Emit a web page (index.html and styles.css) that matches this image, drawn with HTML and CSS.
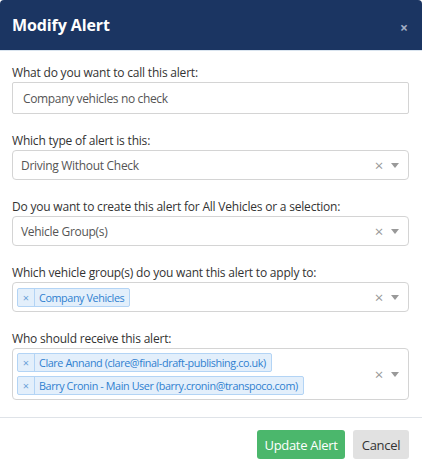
FILE: index.html
```html
<!DOCTYPE html>
<html>
<head>
<meta charset="utf-8">
<link rel="stylesheet" href="styles.css">
</head>
<body>
<div class="modal">
  <div class="modal-header">
    <h1 class="modal-title">Modify Alert</h1>
    <span class="close">×</span>
  </div>
  <div class="modal-body">
    <div class="group">
      <label class="label">What do you want to call this alert:</label>
      <div class="input">Company vehicles no check</div>
    </div>
    <div class="group">
      <label class="label">Which type of alert is this:</label>
      <div class="select">
        <div class="value">Driving Without Check</div>
        <span class="clear">×</span><span class="caret"></span>
      </div>
    </div>
    <div class="group">
      <label class="label">Do you want to create this alert for All Vehicles or a selection:</label>
      <div class="select">
        <div class="value">Vehicle Group(s)</div>
        <span class="clear">×</span><span class="caret"></span>
      </div>
    </div>
    <div class="group">
      <label class="label">Which vehicle group(s) do you want this alert to apply to:</label>
      <div class="select multi">
        <div class="tags">
          <span class="tag"><span class="tag-x">×</span><span class="tag-text">Company Vehicles</span></span>
        </div>
        <span class="clear">×</span><span class="caret"></span>
      </div>
    </div>
    <div class="group">
      <label class="label">Who should receive this alert:</label>
      <div class="select multi">
        <div class="tags">
          <span class="tag"><span class="tag-x">×</span><span class="tag-text">Clare Annand (clare@final-draft-publishing.co.uk)</span></span>
          <span class="tag"><span class="tag-x">×</span><span class="tag-text">Barry Cronin - Main User (barry.cronin@transpoco.com)</span></span>
        </div>
        <span class="clear">×</span><span class="caret"></span>
      </div>
    </div>
  </div>
  <div class="modal-footer">
    <button class="btn btn-primary">Update Alert</button>
    <button class="btn btn-default">Cancel</button>
  </div>
</div>
</body>
</html>
```
FILE: styles.css
```css
html, body {
  margin: 0;
  padding: 0;
  background: #ffffff;
}
body {
  font-family: "Open Sans", "Noto Sans", sans-serif;
  font-size: 12px;
  color: #333;
}
.modal {
  width: 422px;
  height: 471px;
  display: flex;
  flex-direction: column;
  background: #fff;
}
.modal-header {
  height: 50px;
  background: #1b3562;
  border-bottom: 1px solid #d9e4ef;
  border-radius: 4px 4px 0 0;
  display: flex;
  align-items: center;
  justify-content: space-between;
  padding: 0 14px 0 12px;
  flex-shrink: 0;
}
.modal-title {
  margin: 0;
  color: #fff;
  font-size: 16px;
  font-weight: 700;
  letter-spacing: -0.1px;
}
.close {
  color: #a3aec4;
  font-size: 14px;
  font-weight: 700;
  margin-top: 4px;
}
.modal-body {
  padding: 13px 13px 17px 12px;
  display: flex;
  flex-direction: column;
  gap: 18px;
  border-bottom: 1px solid #dfe3e8;
}
.group {
  display: flex;
  flex-direction: column;
}
.label {
  line-height: 17px;
  margin-bottom: 1px;
  color: #333;
  letter-spacing: -0.2px;
}
.input {
  height: 32px;
  box-sizing: border-box;
  border: 1px solid #d4d4d4;
  border-radius: 2px;
  padding: 0 10px;
  display: flex;
  align-items: center;
  color: #555;
  letter-spacing: -0.35px;
}
.select {
  min-height: 30px;
  box-sizing: border-box;
  border: 1px solid #d4d4d4;
  border-radius: 4px;
  padding: 0 8px 0 8px;
  display: flex;
  align-items: center;
  color: #555;
}
.value {
  flex: 1;
  letter-spacing: -0.3px;
}
.clear {
  color: #999;
  font-size: 15px;
  width: 12px;
  text-align: center;
  margin-right: 6px;
}
.caret {
  width: 0;
  height: 0;
  border-left: 4px solid transparent;
  border-right: 4px solid transparent;
  border-top: 5px solid #999;
  margin-right: 1px;
}
.multi {
  padding: 4px 8px 4px 4px;
}
.tags {
  flex: 1;
  display: flex;
  flex-direction: column;
  align-items: flex-start;
  gap: 4px;
}
.tag {
  display: inline-flex;
  align-items: stretch;
  height: 19px;
  box-sizing: border-box;
  background: #e3effb;
  border: 1px solid #b3d4f5;
  border-radius: 2px;
  color: #2f7fd0;
  font-size: 10.8px;
  letter-spacing: -0.4px;
}
.tag-x {
  width: 16px;
  display: flex;
  align-items: center;
  justify-content: center;
  border-right: 1px solid #b3d4f5;
  color: #6a9fd8;
  font-size: 11px;
  letter-spacing: 0;
}
.tag-text {
  display: flex;
  align-items: center;
  padding: 0 5px 0 4px;
}
.modal-footer {
  flex: 1;
  display: flex;
  justify-content: flex-end;
  align-items: flex-start;
  gap: 8px;
  padding: 12px 13px 0 0;
}
.btn {
  height: 29px;
  border: none;
  border-radius: 3px;
  font-family: inherit;
  font-size: 13px;
  padding: 0;
  white-space: nowrap;
  letter-spacing: -0.3px;
}
.btn-primary {
  background: #4bb76c;
  color: #fff;
  width: 88px;
}
.btn-default {
  background: #e1e1e1;
  color: #333;
  width: 56px;
}
```
